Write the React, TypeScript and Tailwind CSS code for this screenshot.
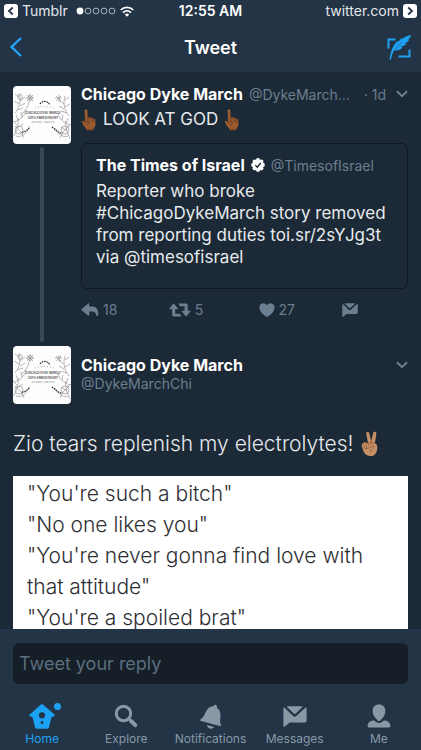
import React from "react";

type IconProps = { className?: string };

const cornerLeaf = "M2 24 C7 18 8 10 6 4 M6 15 L1 12 M7 12 L12 8 M6 8 L2 5 M7 17 L12 14 M4 21 L10 19 M1 33 C7 31 12 27 13 21 M5 31 L3 26 M9 28 L8 23 M1 47 C4 40 6 35 5 29 M4 39 L10 35 M4 36 L0 32";

function Avatar() {
  return (
    <svg viewBox="0 0 58 58" className="size-[58px] shrink-0 rounded" role="img" aria-label="Chicago Dyke March">
      <rect width="58" height="58" fill="#fdfdfd" />
      <g fill="none" stroke="#888" strokeWidth="0.6">
        <g transform="translate(0 3)">
          <path d={cornerLeaf} />
          <circle cx="7" cy="8" r="2.400" />
          <circle cx="17" cy="9" r="2.400" />
          <path d="M17 5v8M13 9h8M14 6l6 6M20 6l-6 6M16 13C15 18 12 22 9 25" />
        </g>
        <circle cx="6" cy="44" r="4" />
        <path d="M3 50C8 52 13 48 16 42M2 40l8 8M8 46l3 6" />
        <g transform="translate(58 0) scale(-1 1)">
          <path d={cornerLeaf} transform="translate(0 6)" />
          <circle cx="6" cy="44" r="4" />
          <path d="M12 9v7M9 12h7M10 10l5 5M15 10l-5 5M3 50C8 52 13 48 16 42M2 40l8 8M8 46l3 6" />
        </g>
      </g>
      <g fill="none" stroke="#333" strokeWidth="1.200" strokeDasharray="1.600 0.800">
        <path d="M27 18C30 14 35 15 37 19" />
        <path d="M9 46C13 46 15 43 17 41M39 41C42 43 44 46 48 47" />
      </g>
      <g fill="none" stroke="#999" strokeWidth="0.800" strokeDasharray="1 2">
        <path d="M22 22C27 20 35 20 41 22" />
      </g>
      <g fill="#444" fontFamily="Inter, sans-serif" fontWeight="600" textAnchor="middle">
        <text x="30" y="28" fontSize="3">CHICAGO DYKE MARCH</text>
        <text x="30" y="33" fontSize="3">20TH ANNIVERSARY</text>
        <text x="30" y="37" fontSize="2" fill="#999">SATURDAY, JUNE 24TH</text>
      </g>
    </svg>
  );
}

function PointUp() {
  return (
    <svg viewBox="0 0 16 22" className="h-[22px] w-4 shrink-0" role="img" aria-label="Pointing up">
      <path d="M3.600 1.800C3.600.2 6.200.2 6.300 1.800L6.800 9l1.100-.6c.9-.5 1.800-.2 2.200.6.8-.4 1.700 0 2 .8 1-.3 2 .3 2.100 1.400l.3 4c0 2.100-.9 3.200-1.900 4.100l-.1 1.500H5.300l-.1-1.400C3.200 17.800 2.200 15.800 1 13.300c-.6-1.300.8-2.200 1.800-1.200l1.300 1.100z" fill="#9a5a2e" />
      <path d="M6.800 9v3.800M10 9.200l.3 3.500M12.200 10l.2 2.900M4.100 13.200c1.500-1 4-1 4.400.4.200 1.100-1.500 1.300-2.400 2" fill="none" stroke="#65371c" strokeWidth=".8" strokeLinecap="round" />
      <path d="M5.300 19.900h7.200v1.400H5.300z" fill="#7c4422" />
      <path d="M4.200 1.900c.2-.9 1.400-.9 1.500 0" fill="none" stroke="#c08456" strokeWidth=".7" />
    </svg>
  );
}

function Victory() {
  return (
    <svg viewBox="0 0 18 26" className="h-[26px] w-[18px] shrink-0" role="img" aria-label="Victory hand">
      <path d="M5.200 2.600C4.800.8 7.700.2 8.200 2l2 8 2-8.200c.5-1.800 3.500-1.200 3.200.7l-1.500 9.700c1.700.8 2.400 2 2.400 4.200 0 4.500-2.100 8.600-6.500 8.600-3.400 0-5.700-1.400-7.300-4.600L1 15.900c-.8-2 .1-4 1.800-4.200 1-.6 2.300-.5 3.200.2l1 .1z" fill="#c68f65" />
      <path d="M1.800 12.500l1.700 4.300c.6 1.300 2.600.7 2.200-.7L4.700 12M7 12.400l1.300 2.200M10.200 10l-.2 2.500M4 17.800c3-.4 5-1 7.400-2.500 1.200-.7 2.200.7 1.100 1.600-1.200 1-2.800 1.700-3.300 4.300M7 12c2-.4 4.500-.4 6.900.2" fill="none" stroke="#8e5c38" strokeWidth=".8" strokeLinecap="round" />
    </svg>
  );
}

function ReplyIcon() {
  return (
    <svg viewBox="0 0 18 14" className="h-3.5 w-[18px]" fill="currentColor" aria-hidden="true">
      <path d="M0 6.700L7.100.6c.6-.5 1.200-.2 1.200.5v2.500h2.500c4.200 0 6.600 2.700 6.500 7.200 0 1.500-.3 2.200-1.100 2.200-.7 0-.9-.5-1.100-1.500-.5-2.100-1.700-3.100-4-3.100H8.300v3.700c0 .8-.7 1-1.200.5z" />
    </svg>
  );
}

function RetweetIcon() {
  return (
    <svg viewBox="0 0 22 14" className="h-3.5 w-[22px]" fill="currentColor" aria-hidden="true">
      <path d="M4.600.3L9 5.500c.3.400.1.700-.4.700H6.200v4.600h4.500l2.200 2.700H4.800c-1 0-1.700-.7-1.700-1.700V6.200H.8c-.6 0-.8-.4-.4-.8z" />
      <path d="M17.100 13.700l4.300-5.200c.3-.4.1-.8-.4-.8h-2.300V2.300c0-1-.6-1.700-1.600-1.700H9l2.200 2.700h4.400v4.400h-2.400c-.5 0-.7.4-.4.800z" />
    </svg>
  );
}

function HeartIcon() {
  return (
    <svg viewBox="0 0 16 14" className="h-3.5 w-4" fill="currentColor" aria-hidden="true">
      <path d="M8 13.900C4.200 11.900.4 8.200.4 4.400.4 2 2 .2 4.300.2 6 .2 7.300 1.100 8 2.500 8.700 1.100 10 .2 11.700.2c2.300 0 3.900 1.800 3.900 4.200 0 3.800-3.800 7.500-7.600 9.500z" />
    </svg>
  );
}

function MessageIcon({ className }: IconProps) {
  return (
    <svg viewBox="0 0 24 21" className={className} fill="currentColor" aria-hidden="true">
      <path d="M4.500.3h14.300c.6 0 .8.500.4.900L13 7.200c-.8.800-1.700.8-2.500 0L4.200 1.200C3.700.8 3.900.3 4.500.3z" />
      <path d="M.4 2.500c0-1 .7-1.300 1.400-.6l8 7.900c1.200 1.200 2.600 1.200 3.800 0l8.500-7.900c.7-.7 1.500-.4 1.500.6v12.300c0 1.100-.6 1.700-1.700 1.700H6.700l-4.900 4c-.7.600-1.400.300-1.400-.5z" />
    </svg>
  );
}

function VerifiedIcon() {
  return (
    <svg viewBox="0 0 24 24" className="size-3.5 shrink-0" role="img" aria-label="Verified">
      <g fill="#fff">
        <circle cx="12" cy="12" r="8.500" />
        <circle cx="12" cy="3.900" r="3.700" />
        <circle cx="12" cy="20.100" r="3.700" />
        <circle cx="3.900" cy="12" r="3.700" />
        <circle cx="20.100" cy="12" r="3.700" />
        <circle cx="6.300" cy="6.300" r="3.700" />
        <circle cx="17.700" cy="6.300" r="3.700" />
        <circle cx="6.300" cy="17.700" r="3.700" />
        <circle cx="17.700" cy="17.700" r="3.700" />
      </g>
      <path d="M7.500 12.500l3.300 3.200 6-7" fill="none" stroke="#1c2936" strokeWidth="2.500" />
    </svg>
  );
}

function ChevronIcon() {
  return (
    <svg viewBox="0 0 12 8" className="h-2 w-3" fill="none" stroke="currentColor" strokeWidth="2" aria-hidden="true">
      <path d="M1 1.200l5 5 5-5" />
    </svg>
  );
}

function ComposeIcon() {
  return (
    <svg viewBox="0 0 24 26" className="h-[26px] w-6" aria-hidden="true">
      <path d="M8.500 5.500H1.500V14.500M11.500 22.500H22.500V15.500" fill="none" stroke="#1da1f2" strokeWidth="2" />
      <path d="M2.500 25.500C3.500 18.500 5.500 11.500 11 6.500L11.300 8 14.500 3.800 14.600 5.500C17.500 2.800 20.500 1.300 24 1.200 23.800 3.300 22.500 4.600 20.500 5.400L22.500 5.500C21.500 7.500 19.500 8.600 17.200 9.300L19.500 9.600C18 11.600 16 12.500 13.500 12.800L15.500 13.400C13.500 15.500 10.500 16.600 7 16.800 5.500 19.500 4.500 22.500 4 25.500z" fill="#1da1f2" />
      <path d="M15 8.500C11.500 11 9 14 7.200 17" fill="none" stroke="#243447" strokeWidth=".5" />
    </svg>
  );
}

function HomeIcon() {
  return (
    <svg viewBox="0 0 26 25" className="h-[25px] w-[26px]" fill="#1da1f2" aria-hidden="true">
      <path fillRule="evenodd" d="M12 .6c.6-.5 1.300-.5 1.900 0l11.500 9.800c.8.700.3 2-.7 2-1 0-1.800.2-2.200 1.200L20 23c-.3 1.100-.8 1.700-1.900 1.700H7.900C6.800 24.700 6.300 24.100 6 23l-2.400-9.400c-.4-1-1.200-1.200-2.200-1.200-1 0-1.500-1.300-.7-2zM13 8.200a3.100 3.100 0 100 6.200 3.100 3.100 0 000-6.200zm0 8.800a1.500 1.500 0 100 3 1.500 1.500 0 000-3z" />
    </svg>
  );
}

function SearchIcon() {
  return (
    <svg viewBox="0 0 24 24" className="size-6" fill="none" stroke="currentColor" aria-hidden="true">
      <circle cx="9.500" cy="9.500" r="7.200" strokeWidth="3" />
      <path d="M15.500 15.500l1.500 1.300" strokeWidth="3" />
      <path d="M17.300 17.300l4 3.800" strokeWidth="4" strokeLinecap="round" />
    </svg>
  );
}

function BellIcon() {
  return (
    <svg viewBox="0 0 24 25" className="h-[25px] w-6" fill="currentColor" aria-hidden="true">
      <path d="M14.300 2.300c.3-1.700 2.500-2.100 3.400-.8.500.7.400 1.500.1 2.200 3.600 2.300 4.200 6.500 3.500 10.500-.4 2.300-.2 4.400.6 6.600.4.900-.1 1.600-1.200 1.300L2 17.100c-1-.3-1.100-1.200-.3-1.800 2.200-1.600 3.500-3.800 4.700-6.500 1.700-3.800 4.200-6.400 7.900-6.500z" />
      <path d="M8 21l7 2.100c-.8 1.400-2.300 2-4 1.500-1.600-.4-2.800-1.700-3-3.600z" />
    </svg>
  );
}

function PersonIcon() {
  return (
    <svg viewBox="0 0 24 24" className="size-6" fill="currentColor" aria-hidden="true">
      <path d="M12 .4c4 0 6.300 2.500 6.300 6.300 0 3-1.100 5.700-3 7.600-1 1-1.700 2.700-3.300 2.700s-2.300-1.700-3.300-2.700c-1.900-1.900-3-4.600-3-7.600C5.700 2.900 8 .4 12 .4z" />
      <path d="M7.300 16.600c1.400 1.400 2.900 2.300 4.700 2.300s3.300-.9 4.700-2.300c3.800 0 6.700 1.900 6.700 5.300 0 .9-.5 1.500-1.500 1.500H2.100c-1 0-1.500-.6-1.500-1.500 0-3.400 2.900-5.300 6.700-5.300z" />
    </svg>
  );
}

function BackChip({ flip }: { flip?: boolean }) {
  return (
    <svg viewBox="0 0 14 14" className="size-3.5" aria-hidden="true">
      <rect width="14" height="14" rx="3" fill="#fff" />
      <path d={flip ? "M5.200 3.500L9 7l-3.800 3.500" : "M8.800 3.500L5 7l3.800 3.500"} fill="none" stroke="#243447" strokeWidth="1.800" />
    </svg>
  );
}

function StatusBar() {
  return (
    <div className="grid h-[22px] grid-cols-[1fr_auto_1fr] items-center px-1 text-[14px] leading-[22px] text-[#e3e7ea]">
      <a href="#tumblr" className="flex items-center gap-1">
        <BackChip />
        <span>Tumblr</span>
        <svg viewBox="0 0 40 8" className="ml-1 h-2 w-10" aria-hidden="true">
          <circle cx="4" cy="4" r="3.400" fill="#fff" />
          <g fill="none" stroke="#b9c1c8" strokeWidth=".9">
            <circle cx="12" cy="4" r="2.900" />
            <circle cx="20" cy="4" r="2.900" />
            <circle cx="28" cy="4" r="2.900" />
            <circle cx="36" cy="4" r="2.900" />
          </g>
        </svg>
        <svg viewBox="0 0 14 11" className="h-[11px] w-3.5" fill="none" stroke="#fff" strokeWidth="1.700" aria-hidden="true">
          <path d="M.7 4C4.200.6 9.800.6 13.300 4M3 6.600c2.300-2.200 5.700-2.200 8 0" />
          <path d="M7 10.800L4.800 8.500c1.300-1.200 3.100-1.200 4.400 0z" fill="#fff" stroke="none" />
        </svg>
      </a>
      <span className="font-semibold text-white">12:55 AM</span>
      <a href="#twitter" className="flex items-center justify-end gap-1">
        <span>twitter.com</span>
        <BackChip flip />
      </a>
    </div>
  );
}

function NavBar() {
  return (
    <div className="grid h-[50px] grid-cols-[1fr_auto_1fr] items-center px-2.5">
      <button type="button" aria-label="Back" className="justify-self-start">
        <svg viewBox="0 0 13 20" className="h-5 w-[13px]" fill="none" stroke="#1da1f2" strokeWidth="2.400" aria-hidden="true">
          <path d="M10.300 1L.9 10l9.400 9" transform="translate(.7)" />
        </svg>
      </button>
      <h1 className="text-[18px] font-semibold text-white">Tweet</h1>
      <button type="button" aria-label="Compose" className="justify-self-end">
        <ComposeIcon />
      </button>
    </div>
  );
}

function Actions() {
  const button = "flex items-center gap-1";
  return (
    <div className="grid grid-cols-4 pt-3 pb-[27px] text-[14px] leading-[18px] text-[#6b7f90]">
      <button type="button" aria-label="Reply" className={button}>
        <ReplyIcon />
        <span>18</span>
      </button>
      <button type="button" aria-label="Retweet" className={button + " pl-1.5"}>
        <RetweetIcon />
        <span>5</span>
      </button>
      <button type="button" aria-label="Like" className={button + " pl-3.5"}>
        <HeartIcon />
        <span>27</span>
      </button>
      <button type="button" aria-label="Share by message" className={button + " pl-4"}>
        <MessageIcon className="h-3.5 w-4" />
      </button>
    </div>
  );
}

const memeLines = [
  "\"You're such a bitch\"",
  "\"No one likes you\"",
  "\"You're never gonna find love with that attitude\"",
  "\"You're a spoiled brat\"",
];

function Tab({ label, active, children }: { label: string; active?: boolean; children: React.ReactNode }) {
  return (
    <a
      href={"#" + label.toLowerCase()}
      aria-current={active ? "page" : undefined}
      className={"flex flex-1 flex-col items-center text-[12px] leading-4 " + (active ? "text-[#1da1f2]" : "text-[#8899a6]")}
    >
      <span className="relative flex h-[30px] items-center">
        {children}
        {active && <span className="absolute top-0.5 -right-1.5 size-[7px] rounded-full bg-[#1da1f2]" />}
      </span>
      <span>{label}</span>
    </a>
  );
}

export default function App() {
  return (
    <div className="flex h-dvh flex-col overflow-hidden bg-[#1c2936] font-['Inter',sans-serif] text-[#e6eaed]">
      <header className="shrink-0 border-b border-[#1a2531] bg-[#243447]">
        <StatusBar />
        <NavBar />
      </header>

      <main className="min-h-0 flex-1 overflow-hidden px-[13px] pt-2">
        <article className="flex gap-2.5">
          <div className="flex flex-col items-center pt-[5px]">
            <Avatar />
            <span className="mt-[3px] mb-1 w-1 flex-1 rounded-sm bg-[#38495a]" />
          </div>
          <div className="min-w-0 flex-1">
            <div className="flex h-[26px] items-center text-[14px] text-[#6b7f90]">
              <h2 className="text-[16px] font-bold whitespace-nowrap text-white">Chicago Dyke March</h2>
              <span className="ml-1.5 whitespace-nowrap">@DykeMarch…</span>
              <span className="ml-auto whitespace-nowrap">· 1d</span>
              <button type="button" aria-label="More" className="ml-2.5">
                <ChevronIcon />
              </button>
            </div>
            <p className="flex h-[26px] items-center gap-1.5 text-[17px]">
              <PointUp />
              LOOK AT GOD
              <PointUp />
            </p>
            <blockquote className="mt-2.5 h-[146px] rounded-md border border-[#101921] px-3.5 pt-2.5">
              <div className="flex h-[22px] items-center gap-1.5">
                <h3 className="text-[16px] font-bold text-white">The Times of Israel</h3>
                <VerifiedIcon />
                <span className="text-[14px] text-[#6b7f90]">@TimesofIsrael</span>
              </div>
              <p className="mt-1 text-[17px] leading-[22px]">
                Reporter who broke #ChicagoDykeMarch story removed from reporting duties toi.sr/2sYJg3t via @timesofisrael
              </p>
            </blockquote>
            <Actions />
          </div>
        </article>

        <article>
          <div className="flex gap-2.5">
            <Avatar />
            <div className="min-w-0 flex-1 pt-2">
              <div className="flex h-[22px] items-center justify-between">
                <h2 className="text-[16px] font-bold text-white">Chicago Dyke March</h2>
                <button type="button" aria-label="More" className="text-[#6b7f90]">
                  <ChevronIcon />
                </button>
              </div>
              <p className="text-[14px] leading-4 text-[#6b7f90]">@DykeMarchChi</p>
            </div>
          </div>
          <p className="mt-6 flex h-8 items-center gap-2 text-[21px] font-light whitespace-nowrap">
            Zio tears replenish my electrolytes!
            <Victory />
          </p>
          <div className="mt-4 bg-white px-3.5 pt-0.5 text-[21px] leading-[31px] font-light text-[#2f2f33]">
            {memeLines.map((line) => (
              <p key={line}>{line}</p>
            ))}
          </div>
        </article>
      </main>

      <footer className="shrink-0 bg-[#243447] pt-3.5">
        <div className="px-[13px]">
          <input
            type="text"
            aria-label="Tweet your reply"
            placeholder="Tweet your reply"
            className="h-[41px] w-full rounded-md bg-[#161e27] px-1.5 text-[18px] outline-none placeholder:text-[#5b6e7f]"
          />
        </div>
        <nav className="flex pt-[17px] pb-[3px]">
          <Tab label="Home" active><HomeIcon /></Tab>
          <Tab label="Explore"><SearchIcon /></Tab>
          <Tab label="Notifications"><BellIcon /></Tab>
          <Tab label="Messages"><MessageIcon className="h-[21px] w-6" /></Tab>
          <Tab label="Me"><PersonIcon /></Tab>
        </nav>
      </footer>
    </div>
  );
}
